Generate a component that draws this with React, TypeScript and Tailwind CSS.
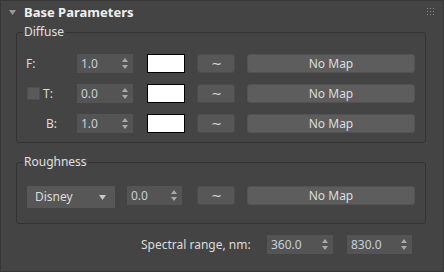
import React from 'react';

// ── Small building blocks ──────────────────────────────────────────────────────

const SpinArrows: React.FC = () => (
  <svg width="6" height="11" viewBox="0 0 6 11" className="shrink-0">
    <path d="M3 0 L6 4 L0 4 Z" fill="#a9a9a9" />
    <path d="M0 7 L6 7 L3 11 Z" fill="#a9a9a9" />
  </svg>
);

const Spinner: React.FC<{ value: string; width: string }> = ({ value, width }) => (
  <div
    className={`${width} h-[19px] bg-[#545454] flex items-center justify-between pl-[4px] pr-[5px] text-[12px] text-[#c5d0db]`}
  >
    <span>{value}</span>
    <SpinArrows />
  </div>
);

const Swatch: React.FC = () => (
  <div className="w-[38px] h-[19px] bg-white border border-black shrink-0" />
);

const TildeButton: React.FC = () => (
  <button className="w-[38px] h-[19px] rounded-[3px] bg-[#575757] border border-[#4d4d4d] flex items-center justify-center text-[13px] text-[#cfd6de] shrink-0">
    ∼
  </button>
);

const NoMapButton: React.FC = () => (
  <button className="w-[168px] h-[19px] rounded-[3px] bg-[#5d5d5d] border border-[#525252] flex items-center justify-center text-[12px] text-[#dcdcdc] shrink-0">
    No Map
  </button>
);

const MapRow: React.FC<{ label: React.ReactNode; value: string }> = ({ label, value }) => (
  <div className="flex items-center h-[19px]">
    <div className="w-[60px] flex items-center text-[12px] text-[#dcdcdc]">{label}</div>
    <Spinner value={value} width="w-[56px]" />
    <div className="ml-[14px]"><Swatch /></div>
    <div className="ml-[12px]"><TildeButton /></div>
    <div className="ml-[12px]"><NoMapButton /></div>
  </div>
);

const GroupBox: React.FC<{ title: string; className?: string; children: React.ReactNode }> = ({
  title,
  className = '',
  children,
}) => (
  <fieldset className={`ml-[15px] w-[410px] border border-[#333333] rounded-[3px] ${className}`}>
    <legend className="ml-[6px] px-[1px] text-[12px] leading-[16px] text-[#e0e0e0]">{title}</legend>
    {children}
  </fieldset>
);

// ── Panel ──────────────────────────────────────────────────────────────────────

export default function App() {
  return (
    <div
      className="w-[444px] h-[272px] bg-[#444444] border border-[#363636] flex flex-col"
      style={{ fontFamily: '"Noto Sans", "Open Sans", sans-serif' }}
    >
      {/* Rollout header */}
      <div className="h-[23px] flex items-center relative shrink-0">
        <svg width="7" height="5" viewBox="0 0 7 5" className="ml-[8px]">
          <path d="M0 0 L7 0 L3.5 5 Z" fill="#9a9a9a" />
        </svg>
        <span className="ml-[8px] text-[13px] font-bold text-[#f0f0f0]">Base Parameters</span>
        <div className="absolute right-[9px] top-[7px] grid grid-cols-3 gap-[2px]">
          {Array.from({ length: 9 }).map((_, i) => (
            <div key={i} className="w-[1px] h-[1px] bg-[#8a8a8a]" />
          ))}
        </div>
      </div>

      {/* Diffuse */}
      <GroupBox title="Diffuse" className="pt-[14px] pb-[9px]">
        <div className="flex flex-col gap-[11px]">
          <MapRow label={<span className="ml-[9px]">F:</span>} value="1.0" />
          <MapRow
            label={
              <>
                <span className="ml-[10px] w-[13px] h-[13px] bg-[#5a5a5a] border border-[#4e4e4e]" />
                <span className="ml-[3px]">T:</span>
              </>
            }
            value="0.0"
          />
          <MapRow label={<span className="ml-[29px]">B:</span>} value="1.0" />
        </div>
      </GroupBox>

      {/* Roughness */}
      <GroupBox title="Roughness" className="mt-[11px] pt-[16px] pb-[15px]">
        <div className="flex items-start">
          <div className="ml-[10px] w-[88px] h-[22px] bg-[#575757] flex items-center justify-between pl-[8px] pr-[9px] text-[12px] text-[#dcdcdc]">
            <span>Disney</span>
            <svg width="7" height="5" viewBox="0 0 7 5">
              <path d="M0 0 L7 0 L3.5 5 Z" fill="#c8c8c8" />
            </svg>
          </div>
          <div className="ml-[12px]"><Spinner value="0.0" width="w-[55px]" /></div>
          <div className="ml-[15px]"><TildeButton /></div>
          <div className="ml-[12px]"><NoMapButton /></div>
        </div>
      </GroupBox>

      {/* Spectral range */}
      <div className="mt-[11px] flex items-center h-[19px]">
        <span className="ml-[140px] text-[12px] text-[#dcdcdc]">Spectral range, nm:</span>
        <div className="ml-auto flex items-center mr-[31px]">
          <Spinner value="360.0" width="w-[66px]" />
          <div className="ml-[14px]"><Spinner value="830.0" width="w-[65px]" /></div>
        </div>
      </div>
    </div>
  );
}
